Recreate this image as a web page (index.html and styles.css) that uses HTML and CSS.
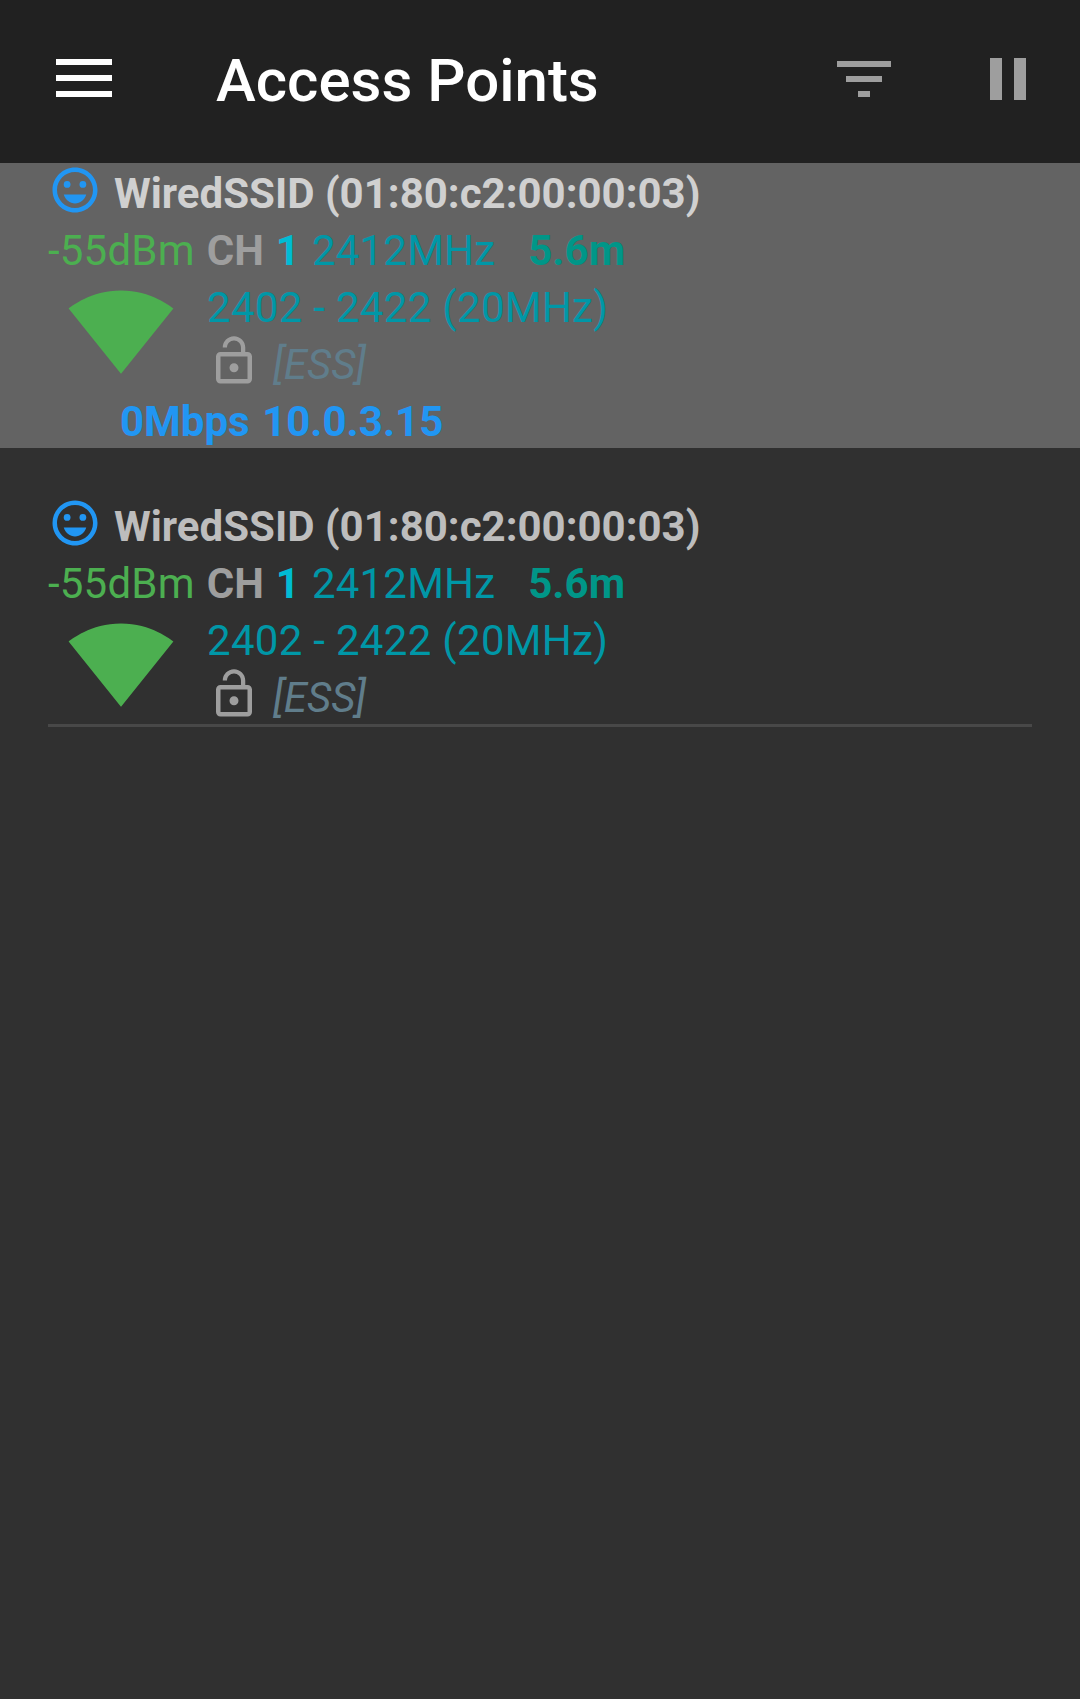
FILE: index.html
```html
<!DOCTYPE html>
<html lang="en">
<head>
  <meta charset="UTF-8" />
  <title>Access Points</title>
  <link rel="stylesheet" href="styles.css">
</head>
<body>

  <header class="toolbar">
    <svg class="icon-menu" viewBox="0 0 72 72"><path d="M9 18h56v6H9zM9 34h56v6H9zM9 50h56v6H9z"/></svg>
    <h1 class="title">Access Points</h1>
    <svg class="icon-filter" viewBox="0 0 24 24"><path d="M10 18h4v-2h-4v2zM3 6v2h18V6H3zm3 7h12v-2H6v2z"/></svg>
    <svg class="icon-pause" viewBox="0 0 24 24"><path d="M6 19h4V5H6v14zm8-14v14h4V5h-4z"/></svg>
  </header>

  <!-- connected network -->
  <section class="ap ap-current">
    <div class="line">
      <svg class="icon-face" viewBox="0 0 24 24"><path d="M11.99 2C6.47 2 2 6.47 2 12s4.47 10 9.99 10S22 17.52 22 12 17.52 2 11.99 2zM12 20c-4.42 0-8-3.58-8-8s3.58-8 8-8 8 3.58 8 8-3.58 8-8 8z"/><circle cx="15.5" cy="9.5" r="1.5"/><circle cx="8.5" cy="9.5" r="1.5"/><path d="M12 18c2.28 0 4.22-1.66 5-4H7c.78 2.34 2.72 4 5 4z"/></svg>
      <span class="ssid">WiredSSID (01:80:c2:00:00:03)</span>
    </div>
    <div class="line">
      <span class="level">-55dBm</span>
      <span class="ch">CH</span>
      <span class="chnum">1</span>
      <span class="freq">2412MHz</span>
      <span class="dist">5.6m</span>
    </div>
    <div class="details">
      <svg class="icon-wifi" viewBox="0 0 24 24"><path d="M12.01 21.49L23.64 7c-.45-.34-4.93-4-11.64-4C5.28 3 .81 6.66.36 7l11.63 14.49.01.01.01-.01z"/></svg>
      <div>
        <div class="line"><span class="freq range">2402 - 2422 (20MHz)</span></div>
        <div class="line">
          <svg class="icon-lock" viewBox="0 0 24 24"><path d="M12 17c1.1 0 2-.9 2-2s-.9-2-2-2-2 .9-2 2 .9 2 2 2zm6-9h-1V6c0-2.76-2.24-5-5-5S7 3.24 7 6h1.9c0-1.71 1.39-3.1 3.1-3.1 1.71 0 3.1 1.39 3.1 3.1v2H6c-1.1 0-2 .9-2 2v10c0 1.1.9 2 2 2h12c1.1 0 2-.9 2-2V10c0-1.1-.9-2-2-2zm0 12H6V10h12v10z"/></svg>
          <span class="caps">[ESS]</span>
        </div>
      </div>
    </div>
    <div class="line ip">0Mbps 10.0.3.15</div>
  </section>

  <section class="ap ap-scan">
    <div class="line">
      <svg class="icon-face" viewBox="0 0 24 24"><path d="M11.99 2C6.47 2 2 6.47 2 12s4.47 10 9.99 10S22 17.52 22 12 17.52 2 11.99 2zM12 20c-4.42 0-8-3.58-8-8s3.58-8 8-8 8 3.58 8 8-3.58 8-8 8z"/><circle cx="15.5" cy="9.5" r="1.5"/><circle cx="8.5" cy="9.5" r="1.5"/><path d="M12 18c2.28 0 4.22-1.66 5-4H7c.78 2.34 2.72 4 5 4z"/></svg>
      <span class="ssid">WiredSSID (01:80:c2:00:00:03)</span>
    </div>
    <div class="line">
      <span class="level">-55dBm</span>
      <span class="ch">CH</span>
      <span class="chnum">1</span>
      <span class="freq">2412MHz</span>
      <span class="dist">5.6m</span>
    </div>
    <div class="details">
      <svg class="icon-wifi" viewBox="0 0 24 24"><path d="M12.01 21.49L23.64 7c-.45-.34-4.93-4-11.64-4C5.28 3 .81 6.66.36 7l11.63 14.49.01.01.01-.01z"/></svg>
      <div>
        <div class="line"><span class="freq range">2402 - 2422 (20MHz)</span></div>
        <div class="line">
          <svg class="icon-lock" viewBox="0 0 24 24"><path d="M12 17c1.1 0 2-.9 2-2s-.9-2-2-2-2 .9-2 2 .9 2 2 2zm6-9h-1V6c0-2.76-2.24-5-5-5S7 3.24 7 6h1.9c0-1.71 1.39-3.1 3.1-3.1 1.71 0 3.1 1.39 3.1 3.1v2H6c-1.1 0-2 .9-2 2v10c0 1.1.9 2 2 2h12c1.1 0 2-.9 2-2V10c0-1.1-.9-2-2-2zm0 12H6V10h12v10z"/></svg>
          <span class="caps">[ESS]</span>
        </div>
      </div>
    </div>
  </section>

</body>
</html>
```

FILE: styles.css
```css
body {
  margin: 0;
  min-height: 1699px;
  background-color: #303030;
  font-family: Roboto, sans-serif;
  font-size: 42px;
}
.toolbar {
  display: flex;
  align-items: flex-start;
  box-sizing: border-box;
  height: 163px;
  padding: 43px 36px 0 47px;
  background-color: #212121;
}
.toolbar svg {
  width: 72px;
  height: 72px;
  flex: none;
}
.icon-menu {
  margin-top: -2px;
  fill: white;
}
.title {
  margin: -2px 0 0 97px;
  color: white;
  font-size: 60px;
  font-weight: 500;
  line-height: 80px;
}
.icon-filter {
  margin-left: auto;
  fill: #9e9e9e;
}
.icon-pause {
  margin-left: 72px;
  fill: #9e9e9e;
}
.ap {
  padding-left: 48px;
}
.ap-current {
  background-color: #636363;
  margin-bottom: 48px;
}
.ap-scan {
  margin-right: 48px;
}
.ap-scan::after {
  content: "";
  display: block;
  height: 3px;
  background-color: #484848;
}
.line {
  display: flex;
  align-items: flex-start;
  height: 57px;
  line-height: 61px;
  white-space: nowrap;
}
.icon-face {
  width: 54px;
  height: 54px;
  margin-right: 12px;
  fill: #2196f3;
}
.ssid {
  color: #bdbdbd;
  font-weight: 700;
}
.ap-current .ssid {
  color: #d0d0d0;
}
.level {
  color: #4caf50;
  letter-spacing: 0.2px;
}
.ch {
  margin-left: 12px;
  color: #9e9e9e;
  font-weight: 700;
}
.chnum {
  margin-left: 12px;
  color: #00bcd4;
  font-weight: 700;
}
.freq {
  color: #0097a7;
  letter-spacing: 0.2px;
}
.chnum + .freq {
  margin-left: 12px;
}
.range {
  letter-spacing: 0.3px;
}
.dist {
  margin-left: 33px;
  color: #009688;
  font-weight: 700;
}
.details {
  display: flex;
}
.icon-wifi {
  flex: none;
  width: 108px;
  height: 108px;
  margin: 0 32px 0 19px;
  fill: #4caf50;
}
.icon-lock {
  width: 54px;
  height: 54px;
  margin-right: 12px;
  fill: #9e9e9e;
}
.caps {
  color: #607d8b;
  font-style: italic;
}
.ip {
  padding-left: 72px;
  color: #2196f3;
  font-weight: 700;
  word-spacing: 2px;
}
```
